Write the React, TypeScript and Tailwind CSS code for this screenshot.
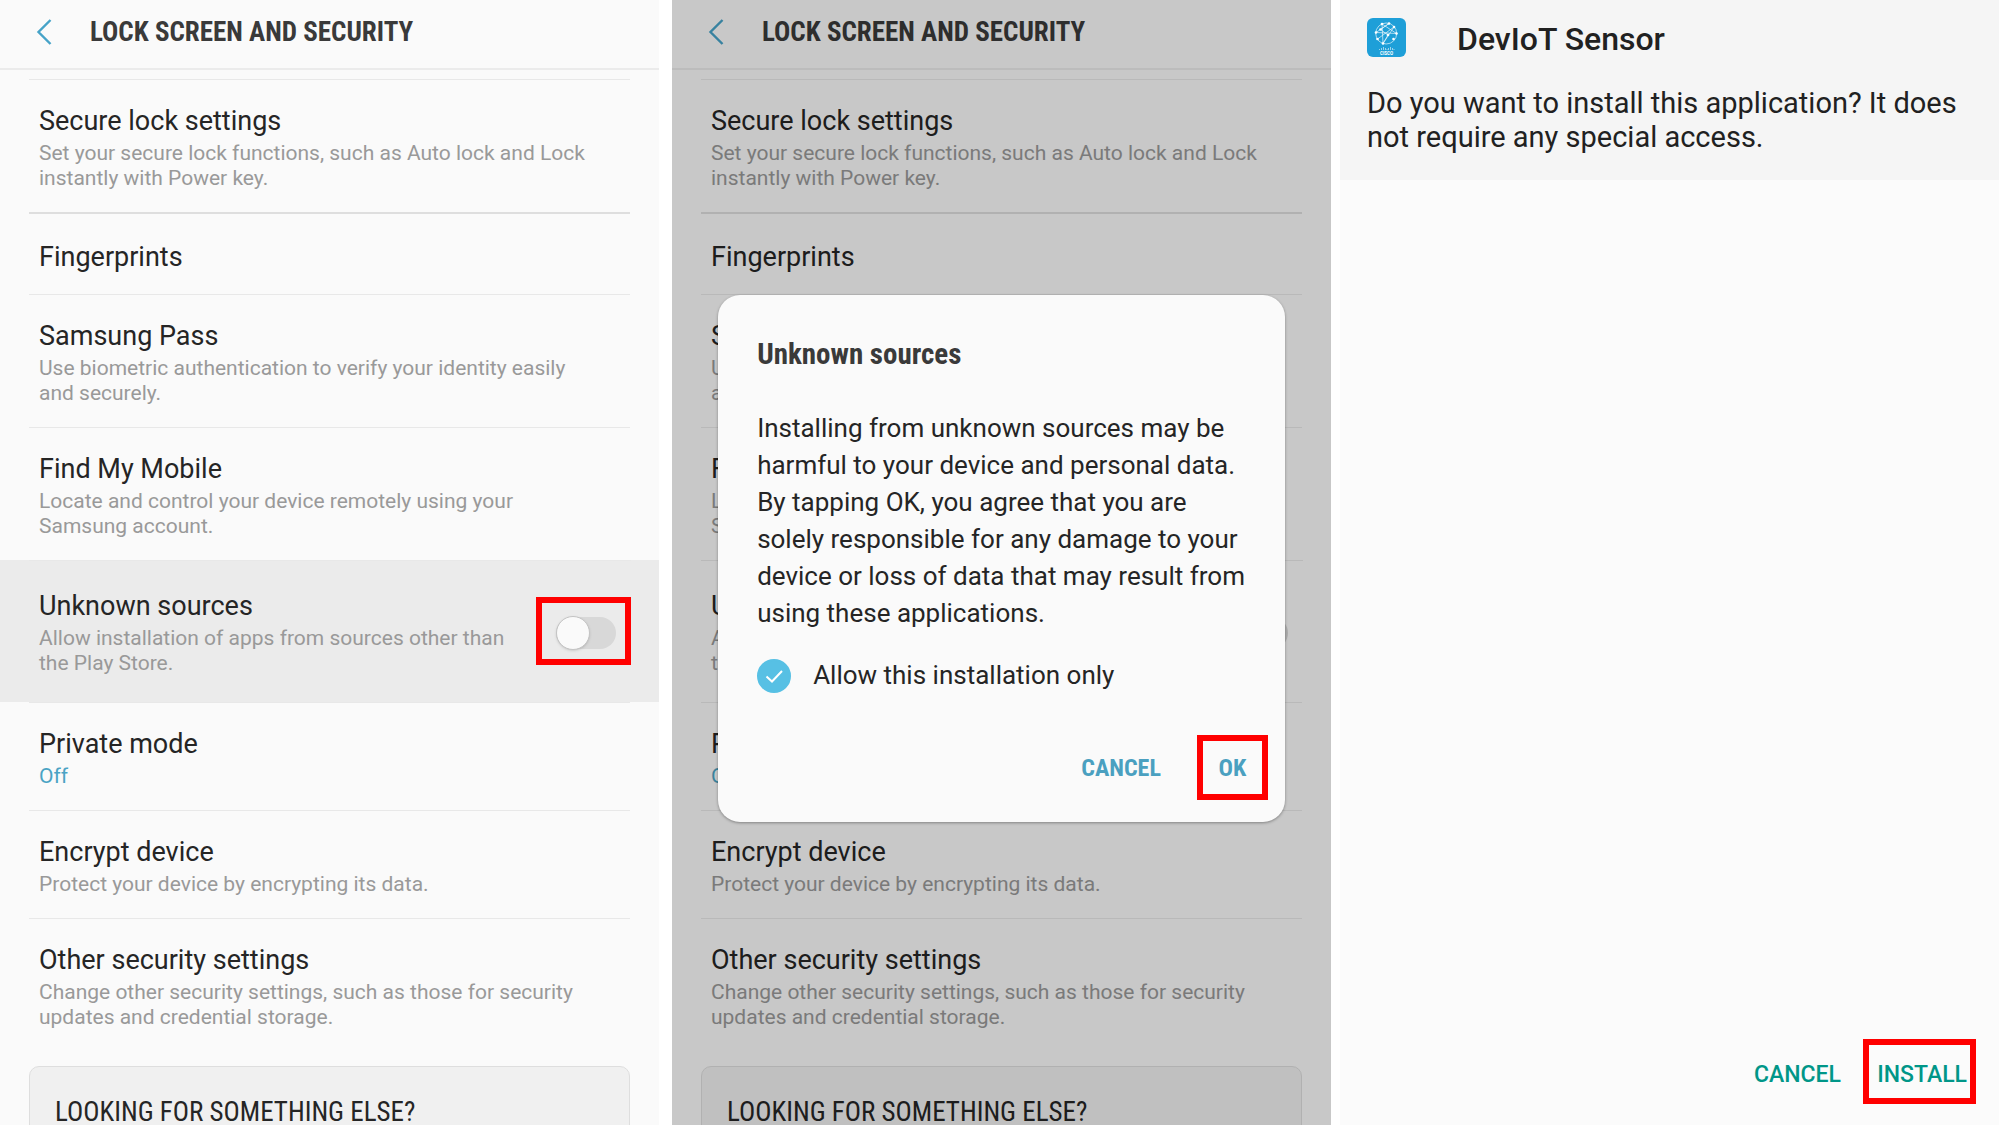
import { useId, type ReactNode } from 'react';

type Setting = {
  title: string;
  lines?: string[];
  accent?: boolean;
  kind?: 'plain' | 'strong' | 'toggle';
};

const settings: Setting[] = [
  {
    title: 'Secure lock settings',
    lines: ['Set your secure lock functions, such as Auto lock and Lock', 'instantly with Power key.'],
  },
  { title: 'Fingerprints', kind: 'strong' },
  {
    title: 'Samsung Pass',
    lines: ['Use biometric authentication to verify your identity easily', 'and securely.'],
  },
  {
    title: 'Find My Mobile',
    lines: ['Locate and control your device remotely using your', 'Samsung account.'],
  },
  {
    title: 'Unknown sources',
    lines: ['Allow installation of apps from sources other than', 'the Play Store.'],
    kind: 'toggle',
  },
  { title: 'Private mode', lines: ['Off'], accent: true },
  { title: 'Encrypt device', lines: ['Protect your device by encrypting its data.'] },
  {
    title: 'Other security settings',
    lines: ['Change other security settings, such as those for security', 'updates and credential storage.'],
  },
];

function Toggle({ label, marked }: { label: string; marked: boolean }) {
  return (
    <div
      className={`flex h-[68px] w-[95px] shrink-0 items-center justify-end border-6 pt-1 pr-[9px] ${
        marked ? 'border-[#ff0000]' : 'border-transparent'
      }`}
    >
      <label className="flex h-[34px] w-[60px] items-center">
        <input type="checkbox" role="switch" aria-label={label} className="peer sr-only" />
        <span className="flex h-8 w-full items-center rounded-full bg-[#d8d8d8] peer-checked:justify-end peer-checked:bg-[#57c0e4]">
          <span className="size-[34px] shrink-0 rounded-full border border-[#c4c4c4] bg-[#fafafa] shadow-sm" />
        </span>
      </label>
    </div>
  );
}

function SettingText({ item }: { item: Setting }) {
  return (
    <div className="min-w-0 flex-1">
      <h2 className="text-[27px] leading-8 text-[#252525]">{item.title}</h2>
      {item.lines && (
        <p className={`mt-1 text-[21px] leading-[25px] ${item.accent ? 'text-[#4aa3c4]' : 'text-[#999999]'}`}>
          {item.lines.map((line) => (
            <span key={line} className="block whitespace-nowrap">
              {line}
            </span>
          ))}
        </p>
      )}
    </div>
  );
}

function SettingRow({ item, marked }: { item: Setting; marked: boolean }) {
  if (item.kind === 'toggle') {
    return (
      <li className={`pr-[28px] pl-[29px] ${marked ? 'bg-[#ebebeb]' : ''}`}>
        <div className="flex items-start border-t border-[#e8e8e8] pb-[26px] pl-[10px]">
          <div className="min-w-0 flex-1 pt-[29px]">
            <SettingText item={item} />
          </div>
          <div className="pt-9">
            <Toggle label={item.title} marked={marked} />
          </div>
        </div>
      </li>
    );
  }
  if (item.kind === 'strong') {
    return (
      <li className="px-[29px]">
        <div className="border-t-2 border-[#dedede] px-[10px] pt-[27px] pb-[21px]">
          <SettingText item={item} />
        </div>
      </li>
    );
  }
  return (
    <li className="px-[29px]">
      <div className="border-t border-[#e8e8e8] px-[10px] pt-[25px] pb-[21px]">
        <SettingText item={item} />
      </div>
    </li>
  );
}

function SecurityScreen({ marked = false }: { marked?: boolean }) {
  return (
    <div className="h-full overflow-hidden bg-[#fafafa]">
      <header className="flex h-[70px] items-center border-b-2 border-[#ebebeb] pb-1 pl-[36px]">
        <button type="button" aria-label="Back" className="flex">
          <svg width="16" height="26" viewBox="0 0 16 26" fill="none" stroke="#46a3c8" strokeWidth="2.4">
            <path d="M14.5 1 2.5 13l12 12" />
          </svg>
        </button>
        <h1 className="ml-[38px] font-['Roboto_Condensed','Roboto',sans-serif] text-[27px] leading-8 font-bold whitespace-nowrap text-[#3a3a3a]">
          LOCK SCREEN AND SECURITY
        </h1>
      </header>
      <ul className="pt-[9px]">
        {settings.map((item) => (
          <SettingRow key={item.title} item={item} marked={marked} />
        ))}
      </ul>
      <section className="mx-[29px] mt-[15px] rounded-t-[10px] border border-[#dedede] bg-[#f0f0f0] px-[25px] pt-[29px] pb-8">
        <h2 className="font-['Roboto_Condensed','Roboto',sans-serif] text-[27px] leading-8 whitespace-nowrap text-[#252525]">
          LOOKING FOR SOMETHING ELSE?
        </h2>
      </section>
    </div>
  );
}

function Marked({ children, className }: { children: ReactNode; className: string }) {
  return <div className={`flex items-center border-6 border-[#ff0000] ${className}`}>{children}</div>;
}

function UnknownSourcesDialog() {
  const id = useId();
  const body = [
    'Installing from unknown sources may be',
    'harmful to your device and personal data.',
    'By tapping OK, you agree that you are',
    'solely responsible for any damage to your',
    'device or loss of data that may result from',
    'using these applications.',
  ];
  return (
    <div
      role="dialog"
      aria-label="Unknown sources"
      className="w-[86%] rounded-[22px] bg-[#fafafa] pt-[38px] pr-[17px] pb-[22px] pl-[39px] shadow-[0_1px_3px_rgba(0,0,0,0.35)]"
    >
      <h2 className="font-['Roboto_Condensed','Roboto',sans-serif] text-[29px] leading-[42px] font-bold text-[#3a3a3a]">
        Unknown sources
      </h2>
      <p className="mt-[35px] text-[26px] leading-[37px] text-[#252525]">
        {body.map((line) => (
          <span key={line} className="block whitespace-nowrap">
            {line}
          </span>
        ))}
      </p>
      <label htmlFor={id} className="mt-[25px] flex items-center gap-[22px] text-[26px] leading-[37px] text-[#252525]">
        <span className="relative flex size-[34px]">
          <input
            id={id}
            type="checkbox"
            defaultChecked
            className="peer size-[34px] appearance-none rounded-full border-2 border-[#57c0e4] checked:bg-[#57c0e4]"
          />
          <svg
            className="pointer-events-none absolute inset-0 hidden peer-checked:block"
            viewBox="0 0 34 34"
            fill="none"
            stroke="#ffffff"
            strokeWidth="2"
          >
            <path d="m9.5 17.5 5.5 5L25 12" />
          </svg>
        </span>
        Allow this installation only
      </label>
      <div className="mt-[41px] flex items-center justify-end font-['Roboto_Condensed','Roboto',sans-serif] text-[24px] leading-8 font-bold text-[#4aa0c0]">
        <button type="button" className="mr-9">
          CANCEL
        </button>
        <Marked className="h-[65px] w-[71px] justify-center">
          <button type="button">OK</button>
        </Marked>
      </div>
    </div>
  );
}

function SensorLogo() {
  const nodes = [
    [15, 6],
    [22, 5.5],
    [27, 9],
    [29.5, 15.5],
    [26.5, 21],
    [16, 25.5],
    [10.5, 21],
    [9, 14.5],
    [13.5, 11.5],
    [21, 17],
  ];
  return (
    <svg width="39" height="39" viewBox="0 0 39 39" role="img" aria-label="DevIoT Sensor logo">
      <rect width="39" height="39" rx="6" fill="#1e9fd8" />
      <g fill="none" stroke="#ffffff" strokeWidth="0.7" opacity="0.9">
        <circle cx="19.2" cy="15.5" r="10.5" />
        <path d="M15 6 29.5 15.5 9 14.5 22 5.5 13.5 11.5 21 17 16 25.5 15 6M27 9 10.5 21M16 25.5 27 9" />
      </g>
      <g fill="#ffffff">
        {nodes.map(([x, y]) => (
          <circle key={`${x}-${y}`} cx={x} cy={y} r="1.3" />
        ))}
      </g>
      <path
        d="M12.5 31v1M14.5 30v2M16.5 29v3M18.500 30v2M20 31v1M21.5 30v2M23.5 29v3M25.5 30v2M27 31v1"
        stroke="#ffffff"
        strokeWidth="0.7"
        opacity="0.8"
      />
      <text x="19.5" y="36.5" textAnchor="middle" fontSize="4.5" fontWeight="700" fill="#ffffff">
        CISCO
      </text>
    </svg>
  );
}

function InstallScreen() {
  return (
    <div className="flex h-full flex-col bg-[#fbfbfb] text-[#212121]">
      <header className="bg-[#f5f5f5] px-[27px] pt-[18px] pb-[26px]">
        <div className="flex items-start gap-[51px]">
          <SensorLogo />
          <h1 className="pt-px text-[32px] leading-10 font-medium">DevIoT Sensor</h1>
        </div>
        <p className="mt-[27px] text-[29px] leading-[34px] whitespace-nowrap">
          Do you want to install this application? It does
          <br />
          not require any special access.
        </p>
      </header>
      <div className="mt-auto flex items-center justify-end pr-[23px] pb-[21px] text-[23px] leading-8 font-medium text-[#009688]">
        <button type="button" className="mr-[22px] pt-1.5">
          CANCEL
        </button>
        <Marked className="h-[65px] w-[113px] justify-end pt-1.5 pr-[3px]">
          <button type="button">INSTALL</button>
        </Marked>
      </div>
    </div>
  );
}

export default function App() {
  return (
    <main className="flex h-screen overflow-hidden bg-white font-['Roboto',sans-serif]">
      <section className="min-w-0 flex-1">
        <SecurityScreen marked />
      </section>
      <section className="relative ml-[13px] min-w-0 flex-1">
        <SecurityScreen />
        <div className="absolute inset-0 flex items-start justify-center bg-black/20 pt-[295px]">
          <UnknownSourcesDialog />
        </div>
      </section>
      <section className="ml-[9px] min-w-0 flex-1">
        <InstallScreen />
      </section>
    </main>
  );
}
